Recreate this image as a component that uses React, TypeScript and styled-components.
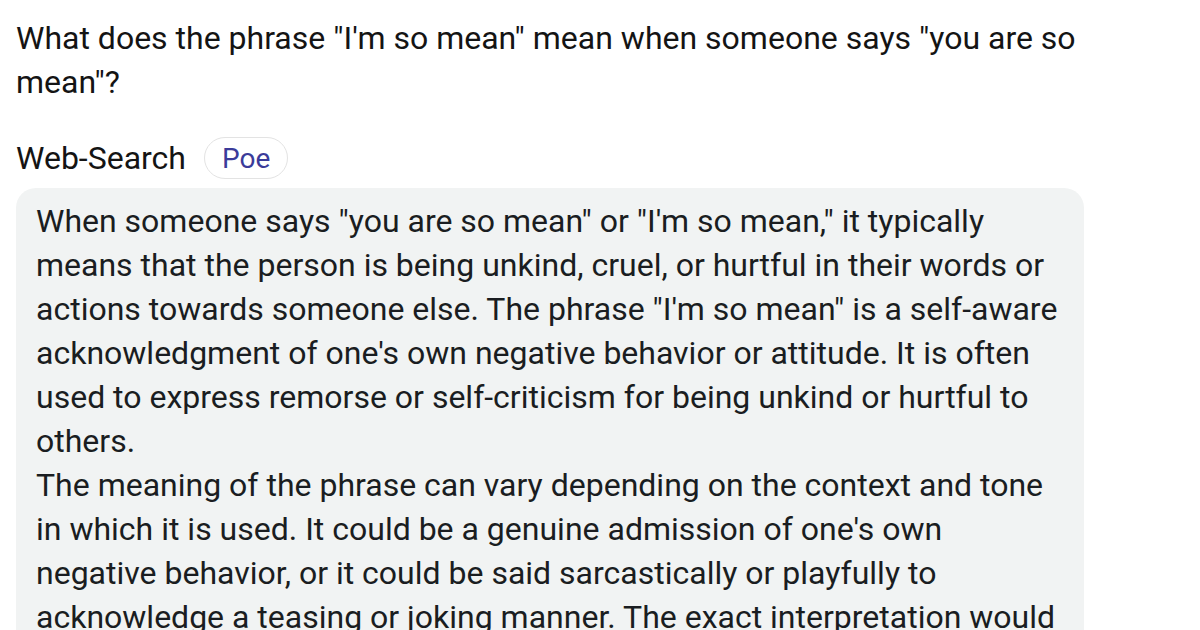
import React from "react";
import styled, { createGlobalStyle } from "styled-components";

const Global = createGlobalStyle`
  html, body { margin: 0; padding: 0; background: #ffffff; overflow: hidden; }
  body { font-family: Roboto, "Noto Sans", Arial, sans-serif; }
`;

const Page = styled.div`
  width: 1068px;
  padding: 16px 16px 0 16px;
  display: flex;
  flex-direction: column;
`;

const Question = styled.p`
  margin: 0;
  font-size: 32px;
  line-height: 44px;
  color: #141414;
`;

const BotRow = styled.div`
  display: flex;
  align-items: center;
  gap: 18px;
  margin-top: 32px;
  height: 44px;
`;

const BotName = styled.span`
  font-size: 32px;
  line-height: 44px;
  color: #141414;
`;

const Chip = styled.span`
  display: inline-flex;
  align-items: center;
  height: 40px;
  padding: 0 17px;
  border: 1px solid #e3e3e3;
  border-radius: 21px;
  font-size: 28px;
  color: #3b3b9a;
`;

const Bubble = styled.div`
  margin-top: 8px;
  background: #f1f3f3;
  border-radius: 20px;
  padding: 11px 21px 20px 20px;
`;

const Para = styled.p`
  margin: 0;
  font-size: 32px;
  line-height: 44px;
  color: #1a1d21;
`;

export default function App() {
  return (
    <>
      <Global />
      <Page>
        <Question>
          What does the phrase "I'm so mean" mean when someone says "you are so mean"?
        </Question>
        <BotRow>
          <BotName>Web-Search</BotName>
          <Chip>Poe</Chip>
        </BotRow>
        <Bubble>
          <Para>
            When someone says "you are so mean" or "I'm so mean," it typically means that the
            person is being unkind, cruel, or hurtful in their words or actions towards someone
            else. The phrase "I'm so mean" is a self-aware acknowledgment of one's own negative
            behavior or attitude. It is often used to express remorse or self-criticism for being
            unkind or hurtful to others.
          </Para>
          <Para>
            The meaning of the phrase can vary depending on the context and tone in which it is
            used. It could be a genuine admission of one's own negative behavior, or it could be
            said sarcastically or playfully to acknowledge a teasing or joking manner. The exact
            interpretation would depend on the specific situation and the relationship between the
            people involved.
          </Para>
        </Bubble>
      </Page>
    </>
  );
}
